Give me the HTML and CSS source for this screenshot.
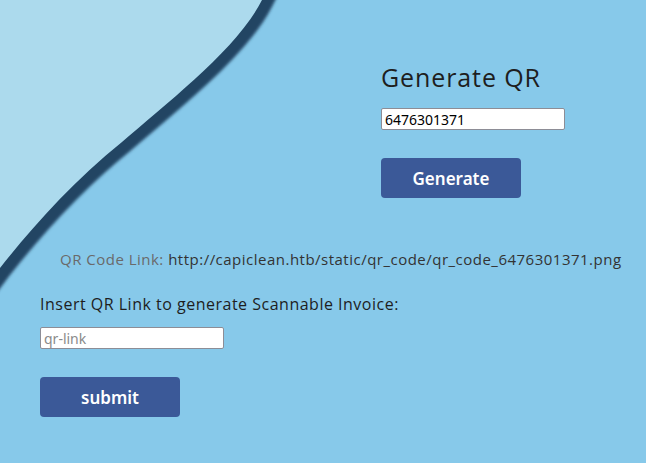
FILE: index.html
```html
<!DOCTYPE html>
<html lang="en">
<head>
  <meta charset="UTF-8">
  <meta name="viewport" content="width=device-width, initial-scale=1.0">
  <title>Capiclean - QR Generator</title>
  <link rel="stylesheet" href="styles.css">
</head>
<body>
  <svg class="wave" width="320" height="300" viewBox="0 0 320 300">
    <defs>
      <filter id="soft" x="-20%" y="-20%" width="140%" height="140%">
        <feGaussianBlur stdDeviation="1.4"/>
      </filter>
    </defs>
    <path d="M272,-20 L262,0 C238,48 168,102 122,142 C72,182 30,230 0,268 L-20,295" fill="none" stroke="#244463" stroke-width="16" filter="url(#soft)" transform="translate(3,3)"/>
    <path d="M-20,-20 L272,-20 L262,0 C238,48 168,102 122,142 C72,182 30,230 0,268 L-20,295 Z" fill="#acdaed"/>
  </svg>

  <div class="page">
    <div class="generate">
      <h2>Generate QR</h2>
      <form class="qr-form">
        <input type="text" class="field" value="6476301371">
        <button type="submit" class="btn">Generate</button>
      </form>
    </div>

    <p class="link-line"><span class="label">QR Code Link:</span> http://capiclean.htb/static/qr_code/qr_code_6476301371.png</p>

    <form class="invoice-form">
      <label for="qr-link">Insert QR Link to generate Scannable Invoice:</label>
      <input type="text" id="qr-link" class="field" placeholder="qr-link">
      <button type="submit" class="btn">submit</button>
    </form>
  </div>
</body>
</html>
```

FILE: styles.css
```css
* {
    margin: 0;
    padding: 0;
    box-sizing: border-box;
}

body {
    font-family: "Open Sans", "Noto Sans", sans-serif;
    background-color: #87c9ea;
    color: #222;
    height: 100vh;
    overflow: hidden;
}

.wave {
    position: absolute;
    top: 0;
    left: 0;
}

.page {
    position: relative;
    padding-top: 60px;
}

.generate {
    margin-left: 381px;
}

.generate h2 {
    font-weight: 400;
    font-size: 25px;
    letter-spacing: 0.9px;
    line-height: 34px;
    color: #1e1e1e;
    margin-bottom: 14px;
}

.field {
    display: block;
    height: 22px;
    padding: 0 3px;
    border: 1px solid #8d8d96;
    border-radius: 2px;
    background: #fff;
    font-family: "Noto Sans", sans-serif;
    font-size: 14px;
    letter-spacing: 0;
    color: #000;
}

.field::placeholder {
    color: #8a8a8a;
}

.qr-form .field,
.invoice-form .field {
    width: 184px;
}

.btn {
    display: block;
    width: 140px;
    height: 40px;
    border: none;
    border-radius: 4px;
    background-color: #3b5998;
    color: #fff;
    font-family: "Noto Sans", sans-serif;
    font-weight: 600;
    font-size: 17px;
    letter-spacing: 0;
    cursor: pointer;
    margin-top: 28px;
}

.link-line {
    margin: 51px 0 0 60px;
    font-size: 15px;
    letter-spacing: 0.49px;
    color: #333;
}

.link-line .label {
    color: #6a6a6a;
}

.invoice-form {
    margin: 24px 0 0 40px;
}

.invoice-form label {
    display: block;
    font-size: 16px;
    letter-spacing: 0.5px;
    color: #1e1e1e;
    margin-bottom: 12px;
}
```
